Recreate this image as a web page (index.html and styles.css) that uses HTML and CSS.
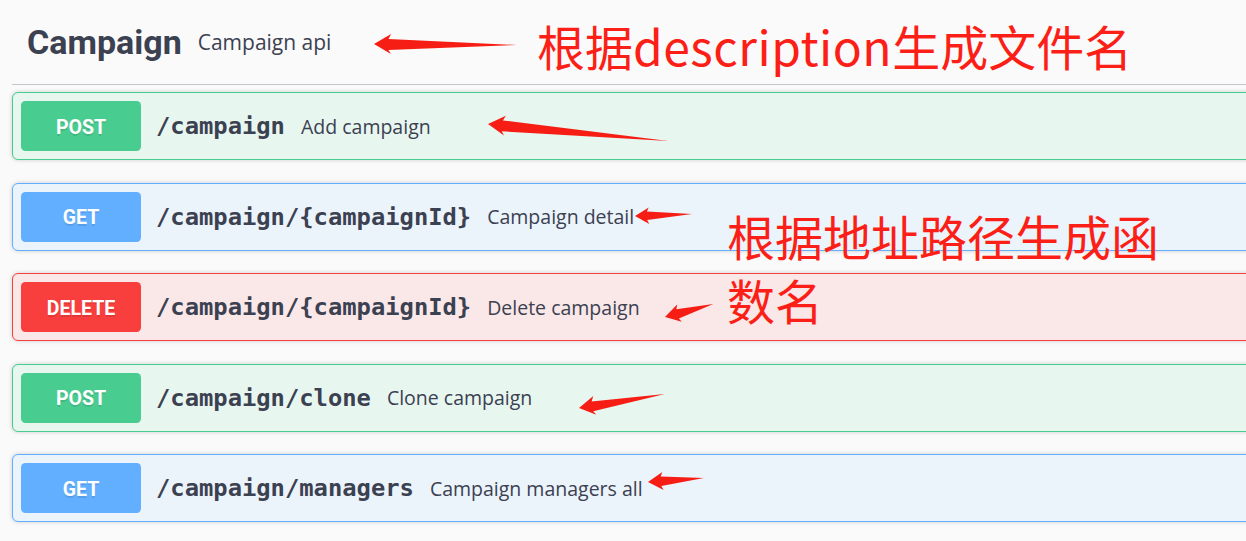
FILE: index.html
```html
<!DOCTYPE html>
<html lang="zh-CN">
<head>
<meta charset="utf-8">
<title>Campaign</title>
<link rel="stylesheet" href="styles.css">
</head>
<body>
<div class="page">
  <section class="tag-section">
    <div class="tag-header">
      <h3 class="tag-name">Campaign</h3>
      <span class="tag-desc">Campaign api</span>
    </div>
    <div class="ops">
      <div class="opblock op-post">
        <span class="method">POST</span>
        <span class="path">/campaign</span>
        <span class="desc">Add campaign</span>
      </div>
      <div class="opblock op-get">
        <span class="method">GET</span>
        <span class="path">/campaign/{campaignId}</span>
        <span class="desc">Campaign detail</span>
      </div>
      <div class="opblock op-delete">
        <span class="method">DELETE</span>
        <span class="path">/campaign/{campaignId}</span>
        <span class="desc">Delete campaign</span>
      </div>
      <div class="opblock op-post">
        <span class="method">POST</span>
        <span class="path">/campaign/clone</span>
        <span class="desc">Clone campaign</span>
      </div>
      <div class="opblock op-get">
        <span class="method">GET</span>
        <span class="path">/campaign/managers</span>
        <span class="desc">Campaign managers all</span>
      </div>
    </div>
  </section>

  <svg class="arrows" width="1246" height="541" viewBox="0 0 1246 541" xmlns="http://www.w3.org/2000/svg">
    <g fill="#f61e14">
      <polygon transform="translate(374 44) rotate(0.4)" points="0,0 17,-10 14.5,-5 143,0 14.5,6 17,10"/>
      <polygon transform="translate(488 124) rotate(5.4)" points="0,0 17,-10 14.5,-5 181,0 14.5,6 17,10"/>
      <polygon transform="translate(635 216) rotate(-2)" points="0,0 14,-8 12,-4 57,0 12,4.5 14,8.5"/>
      <polygon transform="translate(665 317) rotate(-15)" points="0,0 15,-9 13,-4.5 50,0 13,5 15,9"/>
      <polygon transform="translate(579 408) rotate(-9.2)" points="0,0 16,-9.5 13.5,-4.5 87,0 13.5,5.5 16,9.5"/>
      <polygon transform="translate(648 482) rotate(-4.1)" points="0,0 15,-9 13,-4.5 56,0 13,5 15,9"/>
    </g>
  </svg>

  <div class="note note-file">根据<span class="latin">description</span>生成文件名</div>
  <div class="note note-func">根据地址路径生成函数名</div>
</div>
</body>
</html>
```

FILE: styles.css
```css
* {
  box-sizing: border-box;
}

html, body {
  margin: 0;
  padding: 0;
  background: #fafafa;
}

body {
  font-family: "Open Sans", "Noto Sans", sans-serif;
  color: #3b4151;
  overflow: hidden;
}

.page {
  position: relative;
  width: 1246px;
  height: 541px;
  overflow: hidden;
}

.tag-section {
  margin-left: 12px;
  width: 1260px;
}

.tag-header {
  display: flex;
  align-items: center;
  height: 85px;
  padding: 0 0 0 15px;
  border-bottom: 1px solid #c4c6cb;
}

.tag-name {
  margin: 0;
  font-family: Roboto, "Open Sans", sans-serif;
  font-weight: 700;
  font-size: 34px;
  line-height: 1;
  color: #3b4151;
}

.tag-desc {
  margin-left: 16px;
  font-family: "Open Sans", sans-serif;
  font-size: 21px;
  line-height: 1;
  color: #3b4151;
}

.ops {
  display: flex;
  flex-direction: column;
  gap: 22.5px;
  padding-top: 7px;
}

.opblock {
  display: flex;
  align-items: center;
  height: 68px;
  padding: 8px;
  border: 1px solid;
  border-radius: 6px;
  box-shadow: 0 0 4px rgba(0, 0, 0, 0.19);
}

.method {
  display: flex;
  align-items: center;
  justify-content: center;
  flex: none;
  width: 120px;
  height: 50px;
  padding-top: 2px;
  border-radius: 4.5px;
  color: #fff;
  font-family: Roboto, "Open Sans", sans-serif;
  font-weight: 700;
  font-size: 19.5px;
  text-shadow: 0 1.5px 0 rgba(0, 0, 0, 0.1);
}

.path {
  padding: 0 16px 0 15px;
  font-family: "DejaVu Sans Mono", "Liberation Mono", monospace;
  font-weight: 700;
  font-size: 23.8px;
  color: #3b4151;
  white-space: nowrap;
}

.desc {
  font-family: "Open Sans", sans-serif;
  font-size: 19.5px;
  color: #3b4151;
  white-space: nowrap;
}

.op-post {
  background: #e8f6f0;
  border-color: #49cc90;
}
.op-post .method {
  background: #49cc90;
}

.op-get {
  background: #ebf3fb;
  border-color: #61affe;
}
.op-get .method {
  background: #61affe;
}

.op-delete {
  background: #fae7e7;
  border-color: #f93e3e;
}
.op-delete .method {
  background: #f93e3e;
}

.arrows {
  position: absolute;
  left: 0;
  top: 0;
  pointer-events: none;
}

.note {
  position: absolute;
  font-family: "Noto Sans CJK SC", "Noto Sans", sans-serif;
  font-size: 48px;
  line-height: 48px;
  color: #fb1f17;
  font-weight: 400;
}

.note .latin {
  letter-spacing: 0.5px;
}

.note-file {
  left: 537px;
  top: 21px;
  white-space: nowrap;
}

.note-func {
  left: 727px;
  top: 203px;
  width: 440px;
  line-height: 64px;
}
```
